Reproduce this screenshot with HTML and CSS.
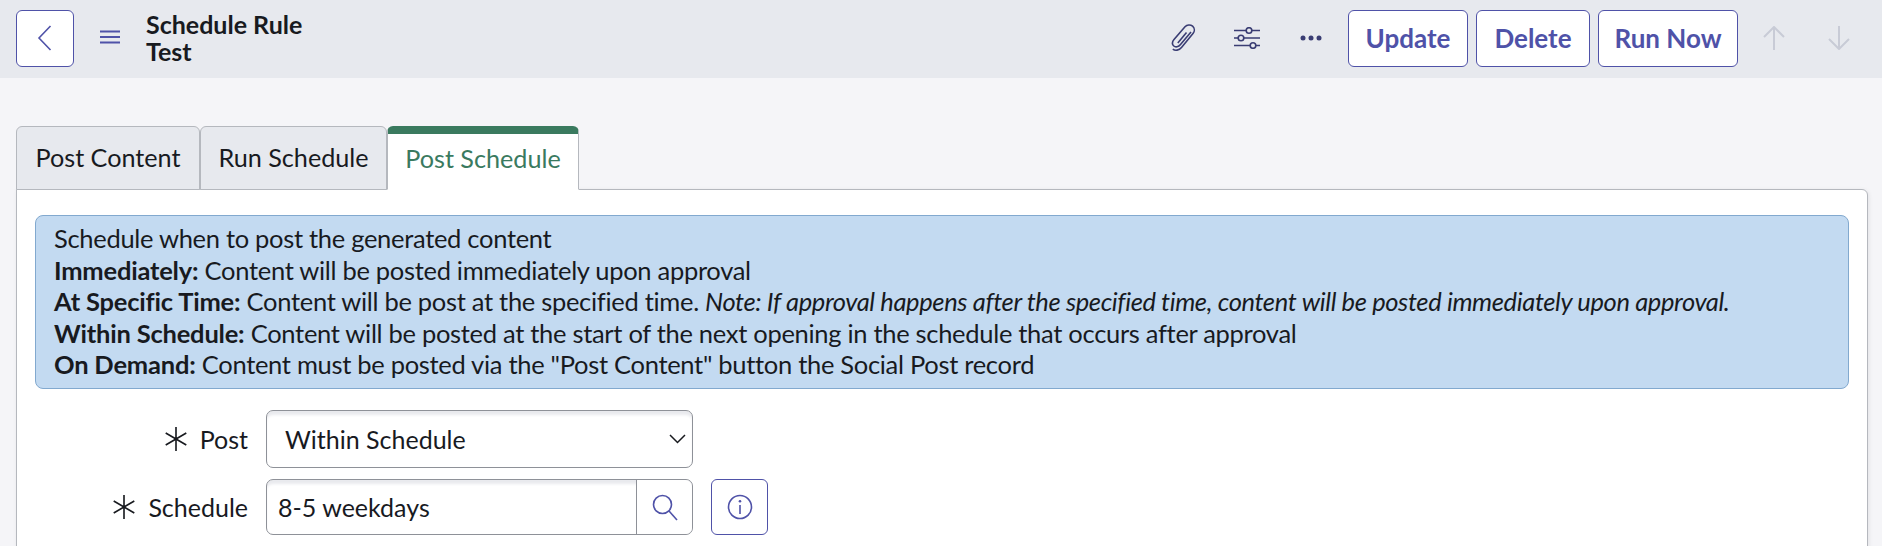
FILE: index.html
```html
<!DOCTYPE html>
<html>
  <head>
    <meta charset="UTF-8">
    <title>Schedule Rule Test</title>
    <link rel="stylesheet" href="styles.css">
  </head>
  <body>
    <!-- top bar -->
    <div class="header">
      <div class="icon-btn back-btn">
        <svg width="20" height="30" viewBox="0 0 20 30"><path d="M15.5 3 L4 15 L15.5 27" class="line thin"/></svg>
      </div>
      <svg class="menu" width="20" height="14" viewBox="0 0 20 14"><path d="M0 1.5H20M0 7H20M0 12.5H20" class="line"/></svg>
      <div class="title">Schedule Rule<br>Test</div>
      <div class="tools">
        <svg class="tool clip" width="26" height="28" viewBox="0 0 26 28"><path d="M21 8 L10.5 20.5 C8.5 23 5.5 23.5 3.8 22 C2 20.4 2.2 17.8 4 15.6 L15 2.8 C17 0.6 20.4 0.4 22.6 2.2 C24.8 4.2 24.8 7.4 23 9.6 L11.5 23.5 C9 26.5 5.2 27 2.8 25.2" class="line dark thin"/><path d="M16.5 8.5 L7.8 19" class="line dark thin"/></svg>
        <svg class="tool sliders" width="26" height="22" viewBox="0 0 26 22"><path d="M0 3.5H12M18 3.5H26M0 11H4M10 11H26M0 18.5H16M22 18.5H26" class="line dark thin"/><circle cx="15" cy="3.5" r="2.8" class="line dark thin"/><circle cx="7" cy="11" r="2.8" class="line dark thin"/><circle cx="19" cy="18.5" r="2.8" class="line dark thin"/></svg>
        <svg class="tool dots" width="22" height="6" viewBox="0 0 22 6"><circle cx="3" cy="3" r="2.5"/><circle cx="11" cy="3" r="2.5"/><circle cx="19" cy="3" r="2.5"/></svg>
      </div>
      <div class="btn btn-update">Update</div>
      <div class="btn btn-delete">Delete</div>
      <div class="btn btn-run">Run Now</div>
      <svg class="arrow" width="24" height="24" viewBox="0 0 24 24"><path d="M12 24V1M2 11L12 1L22 11" class="line pale"/></svg>
      <svg class="arrow" width="24" height="24" viewBox="0 0 24 24"><path d="M12 0V23M2 13L12 23L22 13" class="line pale"/></svg>
    </div>

    <div class="main">
      <div class="tabs">
        <div class="tab tab-one">Post Content</div>
        <div class="tab tab-two">Run Schedule</div>
        <div class="tab tab-three active">Post Schedule</div>
      </div>

      <div class="card">
        <div class="info">
          <div>Schedule when to post the generated content</div>
          <div><b>Immediately:</b> Content will be posted immediately upon approval</div>
          <div><b>At Specific Time:</b> Content will be post at the specified time. <i>Note: If approval happens after the specified time, content will be posted immediately upon approval.</i></div>
          <div><b>Within Schedule:</b> Content will be posted at the start of the next opening in the schedule that occurs after approval</div>
          <div><b>On Demand:</b> Content must be posted via the "Post Content" button the Social Post record</div>
        </div>

        <div class="row row-post">
          <div class="label">
            <svg class="star" width="26" height="26" viewBox="0 0 24 24"><path d="M12 1V23M2.5 6.5L21.5 17.5M21.5 6.5L2.5 17.5" class="line black"/></svg>
            <span>Post</span>
          </div>
          <div class="field select">
            <span>Within Schedule</span>
            <svg width="17" height="10" viewBox="0 0 17 10"><path d="M1 1L8.5 8.5L16 1" class="line black"/></svg>
          </div>
        </div>

        <div class="row">
          <div class="label">
            <svg class="star" width="26" height="26" viewBox="0 0 24 24"><path d="M12 1V23M2.5 6.5L21.5 17.5M21.5 6.5L2.5 17.5" class="line black"/></svg>
            <span>Schedule</span>
          </div>
          <div class="field lookup">
            <span class="lookup-value">8-5 weekdays</span>
            <div class="lookup-btn">
              <svg width="28" height="28" viewBox="0 0 28 28"><circle cx="11.5" cy="11.5" r="9" class="line thin"/><path d="M18 18L26 27" class="line thin"/></svg>
            </div>
          </div>
          <div class="icon-btn info-btn">
            <svg width="26" height="26" viewBox="0 0 26 26"><circle cx="13" cy="13" r="11.5" class="line thin"/><path d="M13 11V20" class="line thin"/><circle cx="13" cy="7.2" r="1.3" class="fill"/></svg>
          </div>
        </div>
      </div>
    </div>
  </body>
</html>
```

FILE: styles.css
```css
html, body {
  height: 100%;
  overflow: hidden;
}

body {
  margin: 0;
  font-family: Lato, "Open Sans", sans-serif;
  font-size: 25px;
  color: #181a1f;
  background-color: #f5f5f8;
}

.line {
  fill: none;
  stroke: #4f52a8;
  stroke-width: 2;
}

.line.thin {
  stroke-width: 1.6;
}

.line.dark {
  stroke: #3a3d73;
}

.line.pale {
  stroke: #c8cbd6;
}

.line.black {
  stroke: #181a1f;
  stroke-width: 1.5;
}

.fill {
  fill: #4f52a8;
}

/* header */
.header {
  display: flex;
  align-items: center;
  height: 78px;
  box-sizing: border-box;
  padding: 0 0 2px 16px;
  background-color: #e7e9ee;
}

.icon-btn {
  display: flex;
  align-items: center;
  justify-content: center;
  box-sizing: border-box;
  background-color: #fff;
  border: 1px solid #4f52a8;
  border-radius: 6px;
}

.back-btn {
  width: 58px;
  height: 57px;
}

.menu {
  margin: 0 0 2px 26px;
}

.title {
  margin-left: 26px;
  width: 300px;
  font-size: 25px;
  font-weight: 700;
  line-height: 27px;
}

.tools {
  display: flex;
  align-items: center;
  margin-left: auto;
}

.tool.clip {
  margin-right: 38px;
}

.tool.sliders {
  margin-right: 40px;
}

.tool.dots {
  margin-right: 26px;
}

.tool.dots circle {
  fill: #3a3d73;
}

.btn {
  display: flex;
  align-items: center;
  justify-content: center;
  box-sizing: border-box;
  height: 57px;
  margin-right: 8px;
  background-color: #fff;
  border: 1px solid #4f52a8;
  border-radius: 6px;
  color: #4f52a8;
  font-size: 26px;
  font-weight: 700;
}

.btn-update {
  width: 120px;
}

.btn-delete {
  width: 114px;
}

.btn-run {
  width: 140px;
  margin-right: 24px;
}

.arrow {
  margin-right: 41px;
}

.arrow:last-child {
  margin-right: 31px;
}

/* tabs */
.main {
  padding: 48px 14px 0 16px;
}

.tabs {
  display: flex;
  position: relative;
  margin-bottom: -1px;
}

.tab {
  display: flex;
  align-items: center;
  justify-content: center;
  box-sizing: border-box;
  height: 64px;
  padding-bottom: 2px;
  background-color: #e7e9ee;
  border: 1px solid #b5b8be;
  border-radius: 6px 6px 0 0;
  font-size: 25.2px;
}

.tab-one {
  width: 184px;
}

.tab-two {
  width: 187px;
}

.tab-three {
  width: 192px;
}

.tab.active {
  padding-bottom: 8px;
  background-color: #fff;
  border-top: 8px solid #3a7a5f;
  border-bottom-color: #fff;
  color: #3a7a5f;
}

/* form panel */
.card {
  box-sizing: border-box;
  padding: 25px 18px 60px;
  background-color: #fff;
  border: 1px solid #b5b8be;
  border-radius: 0 6px 6px 6px;
  box-shadow: 1px 1px 4px rgba(0, 0, 0, .08);
}

.info {
  box-sizing: border-box;
  height: 174px;
  padding: 7px 18px;
  background-color: #c3daf1;
  border: 1px solid #82a9cf;
  border-radius: 8px;
  font-size: 25.5px;
  letter-spacing: -.3px;
  line-height: 31.6px;
}

.info b {
  letter-spacing: -.2px;
}

.info i {
  letter-spacing: -.37px;
}

.row {
  display: flex;
  align-items: center;
  margin-top: 11px;
}

.row-post {
  margin-top: 21px;
}

.label {
  display: flex;
  align-items: center;
  justify-content: flex-end;
  width: 213px;
  margin-right: 18px;
}

.star {
  margin-right: 11px;
}

.field {
  display: flex;
  align-items: center;
  box-sizing: border-box;
  width: 427px;
  background-color: #fff;
  border: 1px solid #8e9198;
  border-radius: 7px;
  box-shadow: inset 0 5px 3px -1px #e9eaee;
}

.select {
  justify-content: space-between;
  height: 58px;
  padding: 0 6px 0 18px;
}

.lookup {
  height: 56px;
  padding-left: 11px;
}

.lookup-value {
  flex: 1;
}

.lookup-btn {
  display: flex;
  align-items: center;
  justify-content: center;
  width: 55px;
  height: 100%;
  border-left: 1px solid #8e9198;
  background-color: #fff;
  border-radius: 0 7px 7px 0;
}

.info-btn {
  width: 57px;
  height: 56px;
  margin-left: 18px;
}
```
